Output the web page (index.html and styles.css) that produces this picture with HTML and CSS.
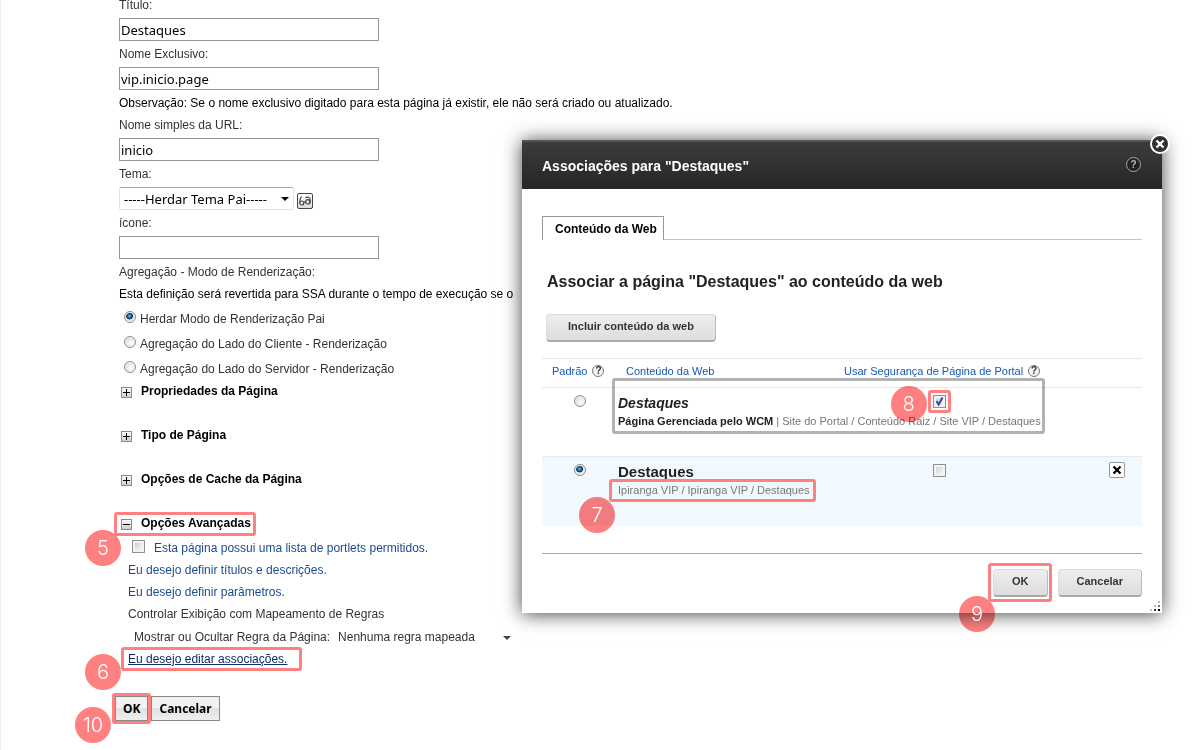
FILE: index.html
```html
<!DOCTYPE html>
<html lang="pt-BR">
<head>
<meta charset="utf-8">
<title>Propriedades da Página</title>
<link rel="stylesheet" href="styles.css">
</head>
<body>
<div class="page">
  <form class="form">
    <label class="line" for="titulo">Título:</label>
    <input class="field" id="titulo" type="text" value="Destaques">
    <label class="line" for="nome">Nome Exclusivo:</label>
    <input class="field" id="nome" type="text" value="vip.inicio.page">
    <p class="line note">Observação: Se o nome exclusivo digitado para esta página já existir, ele não será criado ou atualizado.</p>
    <label class="line" for="url">Nome simples da URL:</label>
    <input class="field" id="url" type="text" value="inicio">
    <label class="line" for="tema">Tema:</label>
    <div class="theme">
      <span class="select-wrap"><select class="select" id="tema"><option>-----Herdar Tema Pai-----</option></select></span>
      <button class="preview" type="button" aria-label="Visualizar tema">
        <svg width="14" height="14" viewBox="0 0 14 14" fill="none" stroke="#444" stroke-width="1.200"><path d="M3.500 2.500C2 4.500 1.500 6.500 1.700 8.500"/><circle cx="3.800" cy="9" r="2"/><circle cx="9.800" cy="7.800" r="2.200"/><path d="M5.800 8.300l1.800-.7M7.500 3.700c2-1.300 4.400-.5 4.600 1.600v4.200"/></svg>
      </button>
    </div>
    <label class="line" for="icone">ícone:</label>
    <input class="field" id="icone" type="text">
    <p class="line">Agregação - Modo de Renderização:</p>
    <p class="line note">Esta definição será revertida para SSA durante o tempo de execução se o</p>
    <div class="radios">
      <label class="option"><input class="radio" type="radio" name="modo" checked>Herdar Modo de Renderização Pai</label>
      <label class="option"><input class="radio" type="radio" name="modo">Agregação do Lado do Cliente - Renderização</label>
      <label class="option"><input class="radio" type="radio" name="modo">Agregação do Lado do Servidor - Renderização</label>
    </div>
    <div class="sections">
      <h3 class="section"><button class="toggle" type="button" aria-label="Expandir"><svg width="11" height="11" viewBox="0 0 11 11"><path d="M2 5.500h7M5.500 2v7" stroke="#000"/></svg></button>Propriedades da Página</h3>
      <h3 class="section"><button class="toggle" type="button" aria-label="Expandir"><svg width="11" height="11" viewBox="0 0 11 11"><path d="M2 5.500h7M5.500 2v7" stroke="#000"/></svg></button>Tipo de Página</h3>
      <h3 class="section"><button class="toggle" type="button" aria-label="Expandir"><svg width="11" height="11" viewBox="0 0 11 11"><path d="M2 5.500h7M5.500 2v7" stroke="#000"/></svg></button>Opções de Cache da Página</h3>
      <h3 class="section marked mark-advanced"><button class="toggle" type="button" aria-label="Recolher"><svg width="11" height="11" viewBox="0 0 11 11"><path d="M2 5.500h7" stroke="#000"/></svg></button>Opções Avançadas<span class="badge"><span class="digit">5</span></span></h3>
    </div>
    <div class="advanced">
      <label class="portlets"><input class="check" type="checkbox">Esta página possui uma lista de portlets permitidos.</label>
      <a class="line link" href="#">Eu desejo definir títulos e descrições.</a>
      <a class="line link" href="#">Eu desejo definir parâmetros.</a>
      <p class="line">Controlar Exibição com Mapeamento de Regras</p>
      <div class="rule">
        <label for="regra">Mostrar ou Ocultar Regra da Página:</label>
        <span class="select-wrap rule-wrap"><select class="rule-select" id="regra"><option>Nenhuma regra mapeada</option></select></span>
      </div>
      <span class="marked mark-assoc"><a class="line link active" href="#">Eu desejo editar associações.</a><span class="badge"><span class="digit">6</span></span></span>
    </div>
    <div class="actions">
      <span class="marked mark-save"><button class="button" type="button">OK</button><span class="badge"><span class="digit">10</span></span></span>
      <button class="button" type="button">Cancelar</button>
    </div>
  </form>

  <section class="dialog" role="dialog" aria-labelledby="dialog-title">
    <header class="dialog-head">
      <h2 class="dialog-title" id="dialog-title">Associações para "Destaques"</h2>
      <button class="help help-dark" type="button" aria-label="Ajuda"><span>?</span></button>
    </header>
    <button class="close" type="button" aria-label="Fechar"><svg width="22" height="22" viewBox="0 0 22 22"><circle cx="11" cy="11" r="9" fill="#303030" stroke="#fff" stroke-width="2"/><path d="M7.500 7.500l7 7M14.500 7.500l-7 7" stroke="#fff" stroke-width="2.400"/></svg></button>
    <div class="dialog-body">
      <div class="tabs" role="tablist"><button class="tab" type="button" role="tab" aria-selected="true">Conteúdo da Web</button></div>
      <h1 class="heading">Associar a página "Destaques" ao conteúdo da web</h1>
      <button class="soft-button include" type="button">Incluir conteúdo da web</button>
      <table class="table">
        <colgroup><col class="col-default"><col class="col-content"><col class="col-security"><col></colgroup>
        <thead>
          <tr>
            <th class="th-default"><span class="head">Padrão <button class="help" type="button" aria-label="Ajuda sobre Padrão"><span>?</span></button></span></th>
            <th class="th-content">Conteúdo da Web</th>
            <th class="th-security"><span class="head">Usar Segurança de Página de Portal <button class="help" type="button" aria-label="Ajuda sobre Segurança"><span>?</span></button></span></th>
            <th></th>
          </tr>
        </thead>
        <tbody>
          <tr>
            <td class="center"><input class="radio" type="radio" name="padrao" aria-label="Padrão: Destaques, Site do Portal"></td>
            <td><div class="entry marked mark-entry"><div class="name managed">Destaques</div><div class="path"><b>Página Gerenciada pelo WCM</b> | Site do Portal / Conteúdo Raiz / Site VIP / Destaques</div></div></td>
            <td class="center"><span class="marked mark-check"><input class="check" type="checkbox" checked aria-label="Usar Segurança de Página de Portal"><svg class="tick" width="13" height="13" viewBox="0 0 13 13" fill="none" stroke="#35479c" stroke-width="2"><path d="M3.500 6l2.200 3.500L9.500 2.500"/></svg><span class="badge"><span class="digit">8</span></span></span></td>
            <td></td>
          </tr>
          <tr class="selected">
            <td class="center"><input class="radio" type="radio" name="padrao" checked aria-label="Padrão: Destaques, Ipiranga VIP"></td>
            <td><div class="entry"><div class="name">Destaques</div><div class="path marked mark-path">Ipiranga VIP / Ipiranga VIP / Destaques<span class="badge"><span class="digit">7</span></span></div></div></td>
            <td class="center"><input class="check" type="checkbox" aria-label="Usar Segurança de Página de Portal"></td>
            <td class="remove-cell"><button class="remove" type="button" aria-label="Remover"><svg width="14" height="14" viewBox="0 0 14 14"><path d="M3.500 3.500l7 7M10.500 3.500l-7 7" stroke="#000" stroke-width="2.200"/></svg></button></td>
          </tr>
        </tbody>
      </table>
      <footer class="dialog-foot">
        <span class="marked mark-ok"><button class="soft-button ok" type="button">OK</button><span class="badge"><span class="digit">9</span></span></span>
        <button class="soft-button" type="button">Cancelar</button>
      </footer>
    </div>
    <svg class="grip" width="12" height="12" viewBox="0 0 12 12"><g fill="#bbb"><rect x="9" y="1" width="2" height="2"/><rect x="5" y="5" width="2" height="2"/><rect x="1" y="9" width="2" height="2"/></g><rect x="9" y="5" width="2" height="2" fill="#777"/><rect x="5" y="9" width="2" height="2" fill="#333"/><rect x="9" y="9" width="2" height="2"/></svg>
  </section>
</div>
</body>
</html>
```
FILE: styles.css
```css
* { box-sizing: border-box; }

body {
  margin: 0;
  background: #fff;
  color: #333;
  font: 12px/22px "Liberation Sans", Arial, sans-serif;
  overflow: hidden;
}

button, input, select { margin: 0; font: inherit; color: inherit; }
button { padding: 0; cursor: pointer; }
h1, h2, h3, p { margin: 0; }

.page {
  position: relative;
  display: flow-root;
  min-height: 100vh;
  box-shadow: inset 1px 0 #eee;
}

.form {
  display: flex;
  flex-direction: column;
  align-items: flex-start;
  margin-top: -6px;
  padding-left: 119px;
}

.line { display: block; white-space: nowrap; }
.note { color: #000; }

.field {
  width: 260px;
  height: 23px;
  margin: 2px 0;
  padding: 0 1px;
  border: 1px solid #959595;
  background: #fff;
  color: #000;
  font: 13px/20px "Noto Sans", sans-serif;
}

.theme { display: flex; align-items: flex-end; gap: 3px; margin: 2px 0; }

.select-wrap { position: relative; display: block; }
.select-wrap::after {
  content: "";
  position: absolute;
  right: 5px;
  top: 10px;
  border: 4px solid transparent;
  border-top-color: #000;
  border-bottom: 0;
  pointer-events: none;
}

.select {
  display: block;
  width: 175px;
  height: 23px;
  padding: 0 4px;
  appearance: none;
  border: 1px solid #e2e3e6;
  border-top-color: #ababab;
  border-radius: 2px;
  background: #fff;
  color: #000;
  font: 13px/20px "Noto Sans", sans-serif;
}

.preview {
  width: 16px;
  height: 16px;
  margin-bottom: 1px;
  border: 1px solid #444;
  border-radius: 2px;
  background: linear-gradient(#fff, #ddd);
}
.preview svg { display: block; }

.radios { padding: 1px 0 0 5px; }
.option { display: flex; align-items: center; gap: 4px; height: 25px; }
.option .radio { margin-bottom: 3px; }

.radio {
  display: block;
  width: 12px;
  height: 12px;
  appearance: none;
  border: 1px solid #8e8f8f;
  border-radius: 50%;
  background: radial-gradient(circle at 60% 60%, #fff, #c9cdd2);
  box-shadow: inset 0 0 0 1px #f4f4f4;
}
.radio:checked {
  background: radial-gradient(circle at 45% 40%, #7ed0f5 0, #1a6fa5 20%, #0b2f50 38%, #e2e6ea 46%);
}

.check {
  display: block;
  width: 13px;
  height: 13px;
  appearance: none;
  border: 1px solid #8e8f8f;
  background: linear-gradient(135deg, #c6cbd0, #fff);
  box-shadow: inset 0 0 0 2px #f4f4f4;
}

.sections { display: flex; flex-direction: column; align-items: flex-start; gap: 22px; margin-top: -1px; }
.section {
  display: flex;
  align-items: center;
  padding-left: 2px;
  color: #000;
  font-size: 12px;
  white-space: nowrap;
}
.toggle {
  width: 11px;
  height: 11px;
  margin: 3px 9px 0 0;
  border: 0;
  outline: 1px solid #8a8a8a;
  outline-offset: -1px;
  background: linear-gradient(#fff, #ccc);
}
.toggle svg { display: block; }

.advanced { margin-top: 3px; padding-left: 9px; }
.portlets { display: flex; align-items: center; gap: 9px; height: 22px; padding-left: 4px; color: #1c4a91; white-space: nowrap; }
.portlets .check { margin-bottom: 4px; }
.link { color: #1c4a91; text-decoration: none; }
.link.active { color: #0b2f6b; text-decoration: underline; }

.rule { display: flex; align-items: center; gap: 8px; height: 23px; padding-left: 6px; white-space: nowrap; }
.rule-select { display: block; width: 174px; height: 22px; padding: 0; appearance: none; border: 0; background: transparent; }
.rule-wrap::after { right: 1px; top: 10px; border-width: 4px 4px 0; border-top-color: #444; }

.actions { display: flex; gap: 3px; margin: 26px 0 20px -4px; }
.button {
  display: block;
  height: 25px;
  padding: 0 7px;
  border: 1px solid #888;
  background: linear-gradient(#f2f2f2 50%, #e2e2e2 50%, #eee);
  color: #000;
  font: bold 12px/22px "Noto Sans", sans-serif;
}

/* Step annotations */
.marked { position: relative; display: inline-block; }
.section.marked { display: flex; }
.marked::after {
  content: "";
  position: absolute;
  inset: -3px;
  border: 3px solid #ff8080;
  border-radius: 3px;
  pointer-events: none;
}
.badge {
  position: absolute;
  width: 36px;
  height: 36px;
  pointer-events: none;
}
.badge::before {
  content: "";
  position: absolute;
  inset: 0;
  border-radius: 50%;
  background: #ff8080;
  mix-blend-mode: multiply;
}
.digit {
  position: relative;
  display: block;
  color: #fff;
  font: 300 20px/36px Inter, sans-serif;
  text-align: center;
}
.mark-advanced::after { inset: 0 -5px -2px -5px; }
.mark-advanced .badge { left: -34px; top: 18px; }
.mark-assoc::after { inset: -1px -15px -1px -7px; }
.mark-assoc .badge { left: -43px; top: 6px; }
.mark-save .badge { left: -40px; top: 11px; }
.mark-entry::after { inset: -16px -4px -3px -6px; border-color: rgba(0, 0, 0, .3); }
.mark-check::after { inset: -5px; }
.mark-check .badge { left: -42px; top: -9px; }
.mark-path::after { inset: -2px -6px -2px -9px; }
.mark-path .badge { left: -39px; top: 16px; }
.mark-ok::after { inset: -6px -4px -5px -5px; }
.mark-ok .badge { left: -34px; top: 27px; }

/* Dialog */
.dialog {
  position: absolute;
  top: 140px;
  left: 522px;
  right: 38px;
  background: #fff;
  box-shadow: 0 1px 18px rgba(0, 0, 0, .75);
}
.dialog-head {
  display: flex;
  align-items: center;
  justify-content: space-between;
  height: 49px;
  padding: 1px 21px 0 20px;
  border-top: 2px solid #555;
  background: linear-gradient(#3c3c3c, #252525);
}
.dialog-title { color: #fff; font-size: 14px; }
.close { position: absolute; top: -7px; right: -9px; border: 0; background: none; }
.close svg { display: block; }

.help {
  width: 12px;
  height: 12px;
  border: 1px solid #777;
  border-radius: 50%;
  background: #f4f4f4;
  color: #333;
  font: bold 10px/10px "Liberation Sans", Arial, sans-serif;
  text-align: center;
}
.help span { display: block; }
.help-dark { width: 15px; height: 15px; margin-bottom: 3px; border-color: #aaa; background: #222; color: #bbb; line-height: 13px; }

.dialog-body { padding: 27px 20px 16px; }
.tabs { border-bottom: 1px solid #c4c4c4; }
.tab {
  display: block;
  height: 24px;
  margin-bottom: -1px;
  padding: 0 6px 0 12px;
  border: 1px solid #999;
  border-bottom: 0;
  background: #fff;
  color: #000;
  font-weight: bold;
}
.heading { margin: 30px 0 20px 5px; color: #222; font-size: 16px; line-height: 24px; }

.soft-button {
  display: block;
  height: 28px;
  padding: 0 18px 3px;
  border: 1px solid #ddd;
  border-right-color: #bbb;
  border-bottom: 2px solid #aaa;
  border-radius: 4px;
  background: linear-gradient(#eee, #ddd);
  color: #333;
  font: bold 11px/22px "Liberation Sans", Arial, sans-serif;
}
.include { margin-left: 4px; padding: 0 21px 3px; }

.table { width: 100%; margin-top: 16px; border-collapse: collapse; table-layout: fixed; font-size: 11px; }
.col-default { width: 76px; }
.col-content { width: 216px; }
.col-security { width: 210px; }
.table tr { border-top: 1px solid #e8e8e8; }
.table th { height: 29px; padding: 0; color: #1658b4; font-weight: normal; line-height: 24px; text-align: left; vertical-align: top; white-space: nowrap; }
.th-default .head { padding-left: 10px; }
.table .th-content { padding-left: 8px; }
.th-security .head { padding-left: 10px; }
.head { display: flex; align-items: center; gap: 5px; }
.table td { height: 69px; padding: 6px 0 0; vertical-align: top; }
.table .center { padding-top: 7px; }
.table .selected { background: #f1f8fe; }
.center .radio, .center > .check { margin: 0 auto; }
.center .marked { display: block; width: 13px; margin: 0 auto; }
.tick { position: absolute; left: 0; top: 0; pointer-events: none; }
.entry { white-space: nowrap; }
.entry.marked, .path.marked { display: table; }
.name { color: #222; font-size: 15px; font-weight: bold; line-height: 18px; }
.managed { font-size: 14px; font-style: italic; }
.path { color: #777; line-height: 19px; }
.path b { color: #222; }
.table .remove-cell { padding: 5px 17px 0 0; }
.remove { display: block; width: 16px; height: 16px; margin-left: auto; border: 1px solid #999; border-radius: 2px; background: #fff; }
.remove svg { display: block; }

.dialog-foot { display: flex; justify-content: flex-end; gap: 10px; margin-top: 27px; padding-top: 15px; border-top: 1px solid #aaa; }
.grip { position: absolute; right: 1px; bottom: 1px; }
```
